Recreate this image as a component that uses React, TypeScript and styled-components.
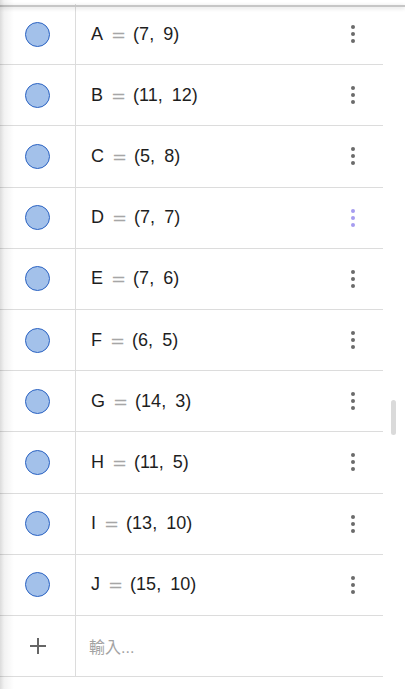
import React from "react";
import styled, { createGlobalStyle } from "styled-components";

const Global = createGlobalStyle`
  html, body { margin: 0; padding: 0; background: #ffffff; }
  body { font-family: "Liberation Sans", Arial, sans-serif; }
`;

const Page = styled.div`
  position: relative;
  width: 405px;
  height: 689px;
  overflow: hidden;
  background: #ffffff;
`;

const List = styled.div`
  width: 383px;
  padding-top: 4px;
  display: flex;
  flex-direction: column;
`;

const Row = styled.div`
  box-sizing: border-box;
  height: 61.2px;
  display: flex;
  align-items: stretch;
  border-bottom: 1px solid #dcdcdc;
`;

const MarbleCell = styled.div`
  box-sizing: border-box;
  width: 76px;
  flex: none;
  display: flex;
  align-items: center;
  justify-content: center;
  border-right: 1px solid #dcdcdc;
`;

const Marble = styled.div`
  box-sizing: border-box;
  width: 25px;
  height: 25px;
  border-radius: 50%;
  background: #a3c1ea;
  border: 1px solid #2a62c2;
`;

const Formula = styled.div`
  flex: 1;
  display: flex;
  align-items: center;
  padding-left: 15px;
  font-family: "Liberation Sans", Arial, sans-serif;
  font-size: 18px;
  color: #1e1e1e;
  word-spacing: 4px;
  white-space: pre;
`;

const Eq = styled.span`
  font-family: "DejaVu Sans", sans-serif;
  font-size: 18px;
  color: #a6a6a6;
  margin: 0 7px 0 8px;
`;

const MenuButton = styled.div`
  width: 40px;
  flex: none;
  display: flex;
  flex-direction: column;
  align-items: center;
  justify-content: center;
  gap: 3px;
  margin-right: 10px;
`;

const Dot = styled.span<{ $active?: boolean }>`
  width: 4px;
  height: 4px;
  border-radius: 50%;
  background: ${(p) => (p.$active ? "#a69cf0" : "#6b6b6b")};
`;

const PlusCell = styled(MarbleCell)`
  color: #666666;
`;

const InputText = styled.div`
  flex: 1;
  display: flex;
  align-items: center;
  padding-left: 13px;
  font-family: "Liberation Sans", "Noto Sans CJK TC", sans-serif;
  font-size: 16px;
  color: #a3a3a3;
`;

const TopShade = styled.div`
  position: absolute;
  left: 0;
  right: 0;
  top: 5px;
  height: 2px;
  background: #c6c6c6;
  box-shadow: 0 1px 4px rgba(0, 0, 0, 0.18);
`;

const LeftShade = styled.div`
  position: absolute;
  left: 0;
  top: 0;
  bottom: 0;
  width: 14px;
  background: linear-gradient(to right, rgba(0, 0, 0, 0.14), rgba(0, 0, 0, 0.05) 30%, rgba(0, 0, 0, 0));
  pointer-events: none;
`;

const ScrollThumb = styled.div`
  position: absolute;
  left: 391px;
  top: 400px;
  width: 5px;
  height: 35px;
  border-radius: 3px;
  background: #dadada;
`;

const points: [string, string, string][] = [
  ["A", "7", "9"],
  ["B", "11", "12"],
  ["C", "5", "8"],
  ["D", "7", "7"],
  ["E", "7", "6"],
  ["F", "6", "5"],
  ["G", "14", "3"],
  ["H", "11", "5"],
  ["I", "13", "10"],
  ["J", "15", "10"],
];

export default function App() {
  return (
    <Page>
      <Global />
      <List>
        {points.map(([n, x, y]) => (
          <Row key={n}>
            <MarbleCell>
              <Marble />
            </MarbleCell>
            <Formula>
              {n}
              <Eq>=</Eq>({x}, {y})
            </Formula>
            <MenuButton>
              <Dot $active={n === "D"} />
              <Dot $active={n === "D"} />
              <Dot $active={n === "D"} />
            </MenuButton>
          </Row>
        ))}
        <Row>
          <PlusCell>
            <svg width="18" height="18" viewBox="0 0 18 18">
              <path d="M9 1v16M1 9h16" stroke="#666" strokeWidth="2" fill="none" />
            </svg>
          </PlusCell>
          <InputText>輸入...</InputText>
        </Row>
      </List>
      <TopShade />
      <LeftShade />
      <ScrollThumb />
    </Page>
  );
}
